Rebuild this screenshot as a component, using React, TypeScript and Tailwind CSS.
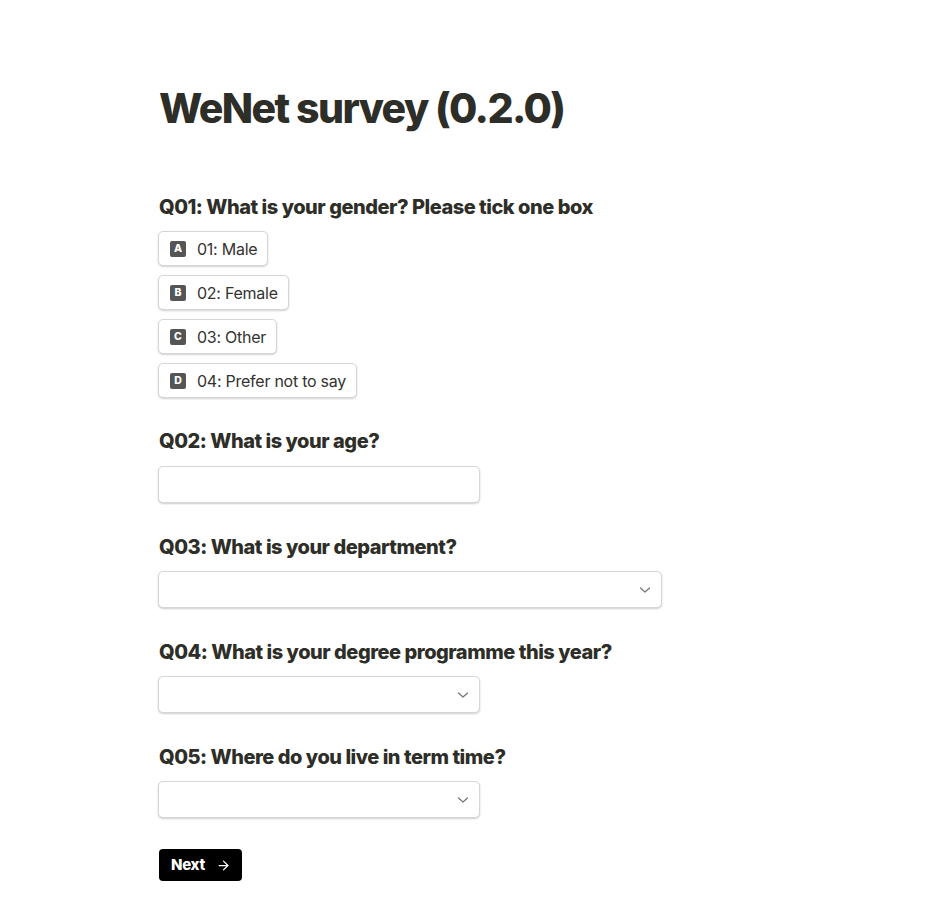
import React from "react";

const font = { fontFamily: "Inter, 'Noto Sans', sans-serif" };

function Chevron() {
  return (
    <svg width="12" height="8" viewBox="0 0 12 8" className="absolute right-[10px] top-1/2 -translate-y-1/2">
      <path d="M1.5 2 L6 6 L10.5 2" fill="none" stroke="#777" strokeWidth="1.3" strokeLinecap="round" strokeLinejoin="round" />
    </svg>
  );
}

function Heading({ children }: { children: React.ReactNode }) {
  return <h2 className="text-[20px] leading-[28px] font-extrabold text-[#2e2e29] tracking-[-0.48px]">{children}</h2>;
}

function Option({ k, label }: { k: string; label: string }) {
  return (
    <button className="flex items-center h-[35px] pl-[11px] pr-[10px] bg-white border border-[#d6d6d6] rounded-[5px] shadow-[0_1px_2px_rgba(0,0,0,0.18)] w-fit">
      <span className="w-[16px] h-[16px] rounded-[2px] bg-[#555555] text-white text-[10.5px] leading-[16px] font-extrabold text-center">{k}</span>
      <span className="ml-[11px] text-[16px] text-[#333330] tracking-[-0.25px]">{label}</span>
    </button>
  );
}

function Field({ w, select }: { w: string; select?: boolean }) {
  return (
    <div className={`relative h-[37px] ${w} bg-white border border-[#d6d6d6] rounded-[5px] shadow-[0_1px_2px_rgba(0,0,0,0.2)]`}>
      {select && <Chevron />}
    </div>
  );
}

export default function App() {
  return (
    <div className="min-h-[916px] bg-white pl-[158px] pt-[82px]" style={font}>
      <h1 className="text-[41px] leading-[53px] font-extrabold text-[#2e2e29] tracking-[-1.6px] pl-[1px]">WeNet survey (0.2.0)</h1>

      <div className="mt-[58px]">
        <div className="pl-[1px]"><Heading>Q01: What is your gender? Please tick one box</Heading></div>
        <div className="mt-[10px] flex flex-col gap-[9px]">
          <Option k="A" label="01: Male" />
          <Option k="B" label="02: Female" />
          <Option k="C" label="03: Other" />
          <Option k="D" label="04: Prefer not to say" />
        </div>
      </div>

      <div className="mt-[29px]">
        <div className="pl-[1px]"><Heading>Q02: What is your age?</Heading></div>
        <div className="mt-[11px]"><Field w="w-[322px]" /></div>
      </div>

      <div className="mt-[30px]">
        <div className="pl-[1px]"><Heading>Q03: What is your department?</Heading></div>
        <div className="mt-[10px]"><Field w="w-[504px]" select /></div>
      </div>

      <div className="mt-[30px]">
        <div className="pl-[1px]"><Heading>Q04: What is your degree programme this year?</Heading></div>
        <div className="mt-[10px]"><Field w="w-[322px]" select /></div>
      </div>

      <div className="mt-[30px]">
        <div className="pl-[1px]"><Heading>Q05: Where do you live in term time?</Heading></div>
        <div className="mt-[10px]"><Field w="w-[322px]" select /></div>
      </div>

      <button className="mt-[31px] ml-[1px] flex items-center h-[32px] w-[83px] bg-black rounded-[4px] pl-[12px] text-white">
        <span className="text-[15px] font-extrabold tracking-[-0.3px]">Next</span>
        <svg width="15" height="15" viewBox="0 0 24 24" className="ml-[11px]" fill="none" stroke="white" strokeWidth="2" strokeLinecap="round" strokeLinejoin="round">
          <path d="M5 12h14" />
          <path d="m12 5 7 7-7 7" />
        </svg>
      </button>
    </div>
  );
}
